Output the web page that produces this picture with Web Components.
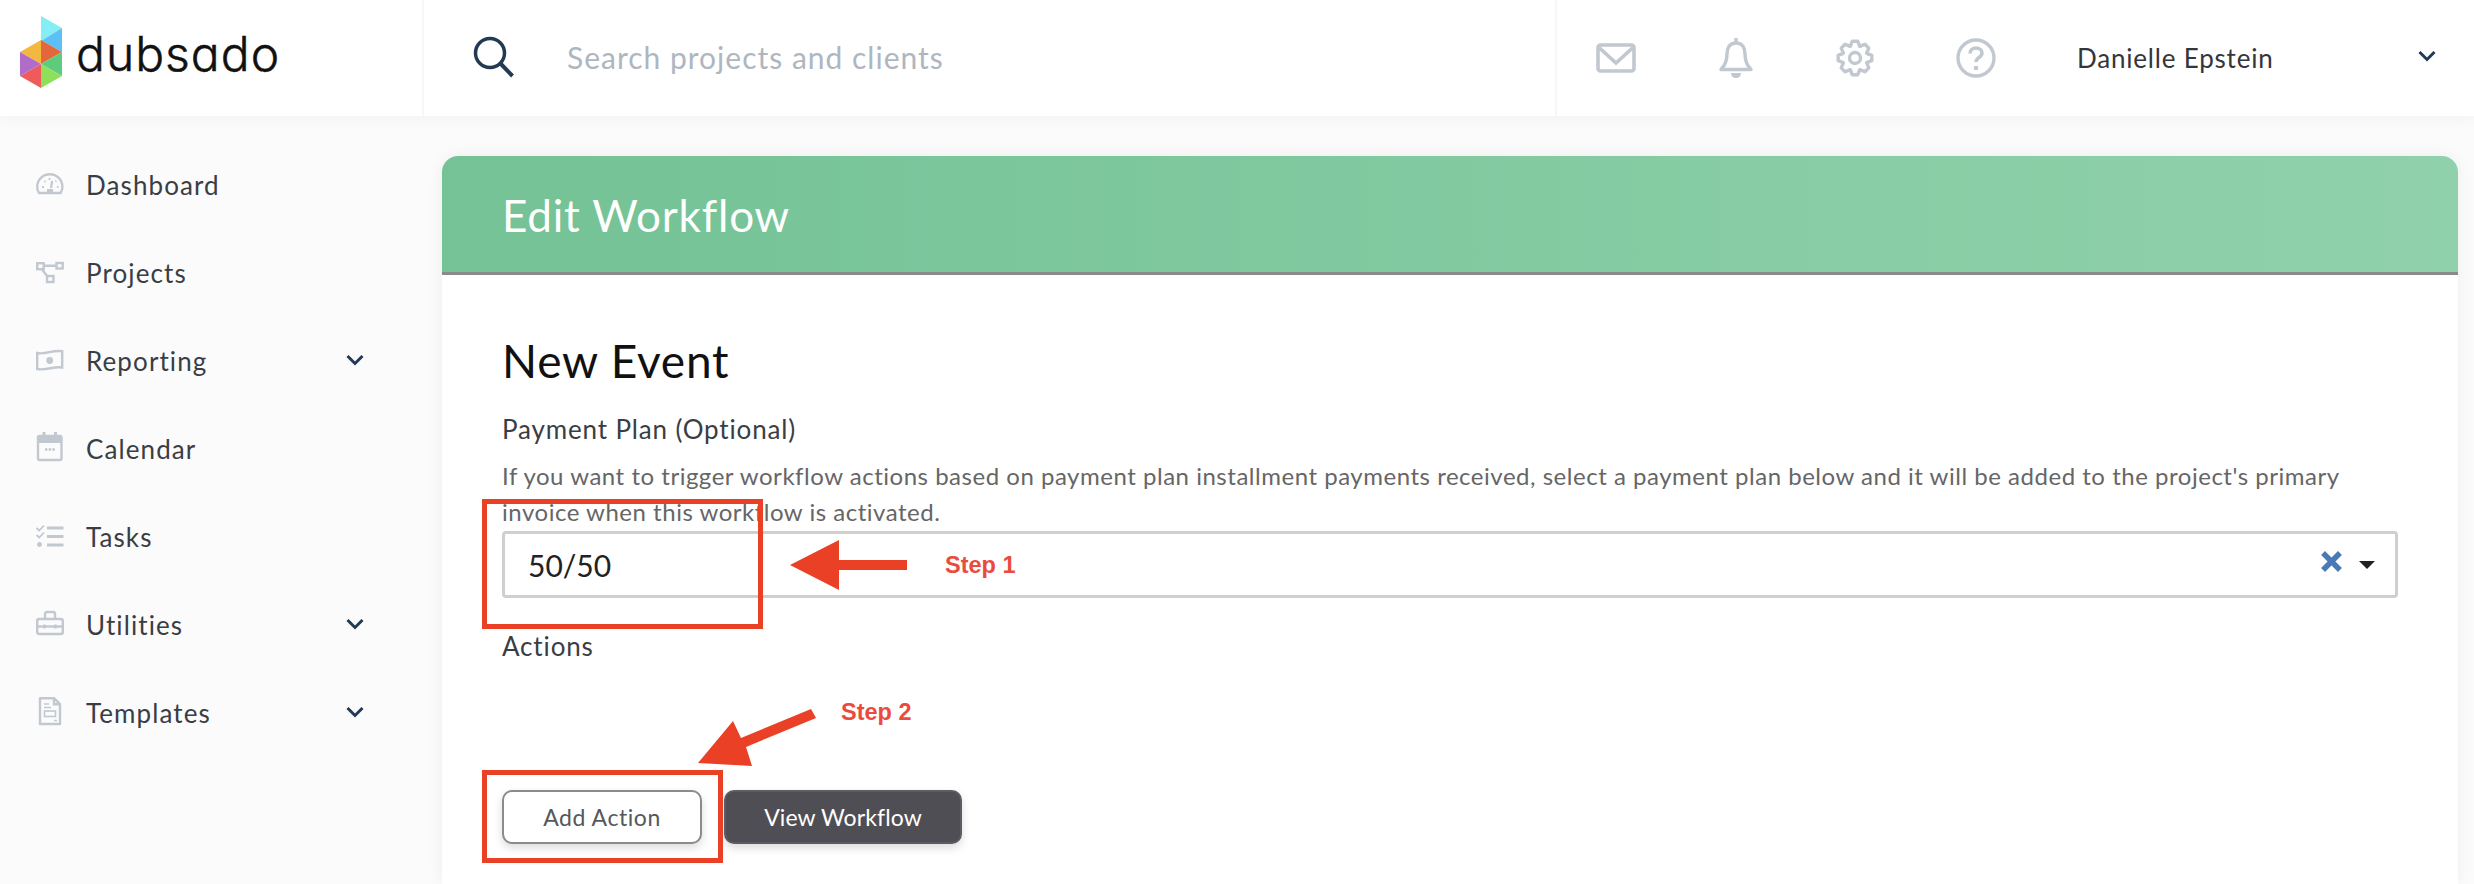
<!DOCTYPE html>
<html>
<head>
<meta charset="utf-8">
<title>Edit Workflow</title>
<style>
html, body { margin: 0; height: 884px; overflow: hidden; background: #fbfbfc; font-family: Lato, "Open Sans", sans-serif; }
dub-app { width: 2474px; height: 884px; }
</style>
</head>
<body>
<dub-app>
  <dub-topbar slot="top" user="Danielle Epstein"></dub-topbar>
  <dub-sidenav slot="side">
    <dub-nav-item icon="dashboard">Dashboard</dub-nav-item>
    <dub-nav-item icon="projects">Projects</dub-nav-item>
    <dub-nav-item icon="reporting" chevron>Reporting</dub-nav-item>
    <dub-nav-item icon="calendar">Calendar</dub-nav-item>
    <dub-nav-item icon="tasks">Tasks</dub-nav-item>
    <dub-nav-item icon="utilities" chevron>Utilities</dub-nav-item>
    <dub-nav-item icon="templates" chevron>Templates</dub-nav-item>
  </dub-sidenav>
  <dub-card title="Edit Workflow">
    <dub-event-form></dub-event-form>
  </dub-card>
  <dub-annotations slot="over"></dub-annotations>
</dub-app>

<script>
const chevron = `<svg viewBox="0 0 18 12" width="18" height="12" fill="none" stroke="#233a54" stroke-width="3"><path d="M1.5 2l7.5 7.5 7.5-7.5"/></svg>`;

// 8 tooth gear outline, centre 19,19
function gearPath() {
  const pts = [];
  for (let i = 0; i < 8; i++) {
    const a = (i * Math.PI) / 4;
    [[-0.62, 12.6], [-0.26, 17], [0.26, 17], [0.62, 12.6]].forEach(([d, r]) => {
      const t = a + d * 0.62;
      pts.push((19 + r * Math.sin(t)).toFixed(1) + " " + (19 - r * Math.cos(t)).toFixed(1));
    });
  }
  return "M" + pts.join("L") + "z";
}

class DubApp extends HTMLElement {
  constructor() {
    super();
    this.attachShadow({ mode: "open" });
    this.shadowRoot.innerHTML = `
<style>
:host { display: block; position: relative; overflow: hidden; }
#main { display: flex; height: 768px; }
#content { flex: 1; padding: 40px 16px 0 0; min-width: 0; }
</style>
<slot name="top"></slot>
<div id="main">
  <slot name="side"></slot>
  <div id="content"><slot></slot></div>
</div>
<slot name="over"></slot>`;
  }
}

class DubTopbar extends HTMLElement {
  constructor() {
    super();
    this.attachShadow({ mode: "open" });
    this.shadowRoot.innerHTML = `
<style>
:host { display: flex; height: 116px; background: #fff; align-items: stretch; font-family: Lato, sans-serif; position: relative; z-index: 2; box-shadow: 0 4px 14px rgba(0,0,0,0.035); }
#brand { width: 424px; box-sizing: border-box; padding-left: 20px; display: flex; align-items: center; border-right: 2px solid #f6f7f8; }
#brand svg { display: block; margin-top: -12px; }
#word { font-family: Inter, sans-serif; font-size: 48px; font-weight: 300; letter-spacing: 1px; color: #111; margin-left: 14px; margin-top: -10px; -webkit-text-stroke: 0.5px #111; font-feature-settings: "cv11"; }
#search { flex: 1; display: flex; align-items: center; padding-left: 49px; border-right: 2px solid #f6f7f8; }
#search svg { display: block; margin-top: -2px; }
#search span { font-size: 30px; color: #aeb6bf; margin-left: 52px; letter-spacing: 1px; margin-top: -3px; }
#tools { width: 917px; flex: none; display: flex; align-items: center; box-sizing: border-box; padding: 0 38px 0 39px; }
#icons { display: flex; gap: 82px; align-items: center; }
#icons svg { display: block; }
#name { font-size: 26px; color: #33363b; flex: 1; margin-left: 81px; letter-spacing: 0.8px; }
#tools > svg { margin-top: -5px; }
</style>
<div id="brand">
  <svg viewBox="20 16 42 72" width="42" height="72">
    <polygon points="41,16 62,28 41,41" fill="#84eef4"/>
    <polygon points="41,41 62,28 62,52 41,40" fill="#5bc0f6"/>
    <polygon points="41,40 20,52 41,64" fill="#f4b740"/>
    <polygon points="41,40 62,52 41,64" fill="#e2673a"/>
    <polygon points="62,52 62,76 41,64" fill="#5ccb7c"/>
    <polygon points="62,76 41,88 41,64" fill="#8ee05a"/>
    <polygon points="41,88 20,76 41,64" fill="#ef5a5a"/>
    <polygon points="20,76 20,52 41,64" fill="#b06cc9"/>
  </svg>
  <div id="word">dubsado</div>
</div>
<div id="search">
  <svg width="42" height="42" viewBox="0 0 42 42" fill="none" stroke="#233a54" stroke-width="3.5"><circle cx="17" cy="17" r="14.5"/><path d="M27 27l12.500 13" stroke-width="4"/></svg>
  <span>Search projects and clients</span>
</div>
<div id="tools">
  <div id="icons">
    <svg width="40" height="30" viewBox="0 0 40 30" fill="none" stroke="#c2c8d0" stroke-width="3.6"><rect x="2" y="2" width="36" height="26" rx="2.5"/><path d="M2.5 4L20 20 37.5 4"/></svg>
    <svg width="36" height="40" viewBox="0 0 36 40" fill="none" stroke="#c2c8d0" stroke-width="3.4"><path d="M18 5c-6.500 0-9 5-9 11 0 7-1.500 11-6 15.500h30c-4.500-4.500-6-8.500-6-15.500 0-6-2.500-11-9-11z" stroke-linejoin="round"/><path d="M18 0v5"/><path d="M13 35h10c0 3-2 5-5 5s-5-2-5-5z" fill="#c2c8d0" stroke="none"/></svg>
    <svg width="38" height="38" viewBox="0 0 38 38" fill="none" stroke="#c2c8d0" stroke-width="3.4" stroke-linejoin="round"><circle cx="19" cy="19" r="5.500"/><path d="${gearPath()}"/></svg>
    <svg width="40" height="40" viewBox="0 0 40 40" fill="none" stroke="#c2c8d0" stroke-width="3.400"><circle cx="20" cy="20" r="18"/><path d="M14 15.500c0-3.500 2.800-5.500 6-5.500s6 2 6 5c0 4.500-6 4.500-6 9" stroke-width="3.600"/><circle cx="20" cy="30" r="2.300" fill="#c2c8d0" stroke="none"/></svg>
  </div>
  <div id="name"></div>
  ${chevron}
</div>`;
  }
  connectedCallback() {
    this.shadowRoot.querySelector("#name").textContent = this.getAttribute("user");
  }
}

class DubSidenav extends HTMLElement {
  constructor() {
    super();
    this.attachShadow({ mode: "open" });
    this.shadowRoot.innerHTML = `
<style>
:host { display: block; width: 442px; flex: none; padding-top: 25px; box-sizing: border-box; }
</style>
<slot></slot>`;
  }
}

// viewBox 28x34, row centre is y=17
const navIcons = {
  dashboard: `<path d="M3 25c-1.200-1.800-1.800-3.800-1.800-6.200C1.200 11.800 6.800 6.200 13.800 6.200S26.400 11.800 26.400 18.800c0 2.400-.6 4.400-1.800 6.200z"/><path d="M15 20l1.200-7" stroke-width="2.200"/><path d="M11 21h6v3h-6z" fill="#c2c8d0" stroke="none"/><path d="M6 19h2M8.500 13l1 1M13.500 10v2M19.500 13.500l.8-.8M21 19h1.500" stroke-width="1.800"/>`,
  projects: `<rect x="1.200" y="7.200" width="6.500" height="6"/><rect x="20.500" y="7" width="6.200" height="5.500"/><rect x="11" y="20" width="6.500" height="6"/><path d="M8 9.800h12.500M6 13.500l5.500 7"/>`,
  reporting: `<path d="M1.200 9c8 2 16-3.500 25-1.800V23.500c-8-1.800-16 3.500-25 1.500z"/><circle cx="13.700" cy="16.500" r="3.400" fill="#c2c8d0" stroke="none"/>`,
  calendar: `<rect x="2" y="4" width="23.500" height="24" rx="1.500"/><path d="M2 8h23.500" stroke-width="6"/><path d="M8 0v5M19.500 0v5" stroke-width="3"/><path d="M9 17.500h2.400M12.700 17.500h2.400M16.400 17.500h2.400" stroke-width="2.600"/>`,
  tasks: `<path d="M.5 8l2.700 2.500L8 5.500M.5 15l2.700 2.500L8 12.500" stroke-width="1.800"/><circle cx="3.500" cy="24.500" r="2.400" fill="#c2c8d0" stroke="none"/><path d="M11 8h16.500M11 16.500h16.500M11 25h16.500" stroke-width="2.800"/>`,
  utilities: `<rect x="1.200" y="11" width="25.600" height="15" rx="2"/><path d="M9 11V6c0-1.200.8-2 2-2h6c1.200 0 2 .8 2 2v5"/><path d="M1.500 18.500h25"/><path d="M8.500 16.500v4M19.500 16.500v4"/>`,
  templates: `<path d="M4 2.200h14l6 6V28H4z" stroke-linejoin="round"/><path d="M18 2.200v6h6" /><path d="M8 8h5M8 11.500h7M18 24.500h3" stroke-width="1.500"/><rect x="8.500" y="15" width="11" height="5.500" stroke-width="1.600"/>`
};

class DubNavItem extends HTMLElement {
  constructor() {
    super();
    this.attachShadow({ mode: "open" });
    this.shadowRoot.innerHTML = `
<style>
:host { display: flex; align-items: center; height: 88px; padding-left: 36px; font-family: Lato, sans-serif; font-size: 26px; letter-spacing: 1.1px; color: #3a3e44; position: relative; }
svg.ic { display: block; flex: none; width: 28px; height: 34px; margin-right: 22px; overflow: visible; }
.chev { margin-left: auto; margin-right: 78px; display: flex; margin-top: -2px; }
.chev[hidden] { display: none; }
</style>
<svg class="ic" viewBox="0 0 28 34" fill="none" stroke="#c2c8d0" stroke-width="2.400"></svg>
<slot></slot>
<span class="chev" hidden>${chevron}</span>`;
  }
  connectedCallback() {
    this.shadowRoot.querySelector(".ic").innerHTML = navIcons[this.getAttribute("icon")];
    this.shadowRoot.querySelector(".chev").hidden = !this.hasAttribute("chevron");
  }
}

class DubCard extends HTMLElement {
  constructor() {
    super();
    this.attachShadow({ mode: "open" });
    this.shadowRoot.innerHTML = `
<style>
:host { display: block; height: 100%; background: #fff; border-radius: 16px 16px 0 0; box-shadow: 0 0 16px rgba(0,0,0,0.06); font-family: Lato, sans-serif; }
#head { height: 114px; padding-top: 2px; border-bottom: 3px solid #8a8a8a; border-radius: 16px 16px 0 0; background: linear-gradient(90deg, #74c296, #90d1ab); display: flex; align-items: center; padding-left: 60px; color: #fff; font-size: 44px; letter-spacing: 0.8px; }
</style>
<div id="head"></div>
<slot></slot>`;
  }
  connectedCallback() {
    this.shadowRoot.querySelector("#head").textContent = this.getAttribute("title");
  }
}

class DubSelect extends HTMLElement {
  constructor() {
    super();
    this.attachShadow({ mode: "open" });
    this.shadowRoot.innerHTML = `
<style>
:host { display: flex; align-items: center; height: 67px; box-sizing: border-box; border: 3px solid #cfcfcf; border-radius: 4px; padding: 0 20px 0 23px; font-size: 30px; color: #222; }
#val { flex: 1; }
#x { display: block; margin: -6px 17px 0 0; }
#caret { width: 0; height: 0; border: 8px solid transparent; border-top: 8px solid #222; border-bottom: 0; }
</style>
<div id="val"><slot></slot></div>
<svg id="x" width="21" height="21" viewBox="0 0 21 21" stroke="#4a7ab5" stroke-width="5.500" stroke-linecap="square"><path d="M4 4l13 13M17 4L4 17"/></svg>
<div id="caret"></div>`;
  }
}

class DubButton extends HTMLElement {
  constructor() {
    super();
    this.attachShadow({ mode: "open" });
    this.shadowRoot.innerHTML = `
<style>
:host { display: flex; align-items: center; justify-content: center; height: 54px; box-sizing: border-box; border-radius: 10px; font-size: 23px; letter-spacing: 0.55px; background: #fff; color: #55585c; border: 2px solid #8b8b8b; box-shadow: 0 4px 10px rgba(0,0,0,0.14); }
:host([dark]) { background: #4f4e55; color: #fff; border-color: #5d5c63; letter-spacing: 0.1px; }
</style>
<slot></slot>`;
  }
}

class DubEventForm extends HTMLElement {
  constructor() {
    super();
    this.attachShadow({ mode: "open" });
    this.shadowRoot.innerHTML = `
<style>
:host { display: block; padding: 58px 60px 0; font-family: Lato, sans-serif; }
h2 { margin: 0; font-size: 46px; line-height: 56px; font-weight: 400; color: #111; letter-spacing: 0.8px; }
.label { margin-top: 23px; font-size: 26px; line-height: 34px; color: #3a3e44; letter-spacing: 0.85px; }
p { margin: 12px 0 1px; font-size: 24px; line-height: 36px; color: #666; letter-spacing: 0.52px; white-space: nowrap; }
.label.actions { margin-top: 31px; }
.btns { display: flex; gap: 22px; margin-top: 127px; }
.add { width: 200px; }
.view { width: 238px; }
</style>
<h2>New Event</h2>
<div class="label">Payment Plan (Optional)</div>
<p>If you want to trigger workflow actions based on payment plan installment payments received, select a payment plan below and it will be added to the project's primary<br>invoice when this workflow is activated.</p>
<dub-select>50/50</dub-select>
<div class="label actions">Actions</div>
<div class="btns">
  <dub-button class="add">Add Action</dub-button>
  <dub-button class="view" dark>View Workflow</dub-button>
</div>`;
  }
}

// red markup drawn over the screenshot, sits on a free canvas
class DubAnnotations extends HTMLElement {
  constructor() {
    super();
    this.attachShadow({ mode: "open" });
    this.shadowRoot.innerHTML = `
<style>
:host { display: block; position: absolute; inset: 0; pointer-events: none; }
svg { position: absolute; left: 0; top: 0; }
.step { position: absolute; font-family: "Liberation Sans", sans-serif; font-weight: 700; font-size: 23.5px; line-height: 28px; color: #ea4b3c; }
</style>
<svg width="2474" height="884">
  <g fill="none" stroke="#ea4025" stroke-width="5">
    <rect x="484.500" y="501.500" width="276" height="125"/>
    <rect x="484.500" y="772.500" width="236" height="88"/>
  </g>
  <g fill="#ea4025">
    <polygon points="790,565 839,540 839,560 907,560 907,570 839,570 839,590"/>
    <polygon points="698,763 733,721 741,738 811,709 816,718 746,747 752,766"/>
  </g>
</svg>
<div class="step" style="left:945px;top:551px">Step 1</div>
<div class="step" style="left:841px;top:698px">Step 2</div>`;
  }
}

customElements.define("dub-app", DubApp);
customElements.define("dub-topbar", DubTopbar);
customElements.define("dub-sidenav", DubSidenav);
customElements.define("dub-nav-item", DubNavItem);
customElements.define("dub-card", DubCard);
customElements.define("dub-select", DubSelect);
customElements.define("dub-button", DubButton);
customElements.define("dub-event-form", DubEventForm);
customElements.define("dub-annotations", DubAnnotations);
</script>
</body>
</html>
